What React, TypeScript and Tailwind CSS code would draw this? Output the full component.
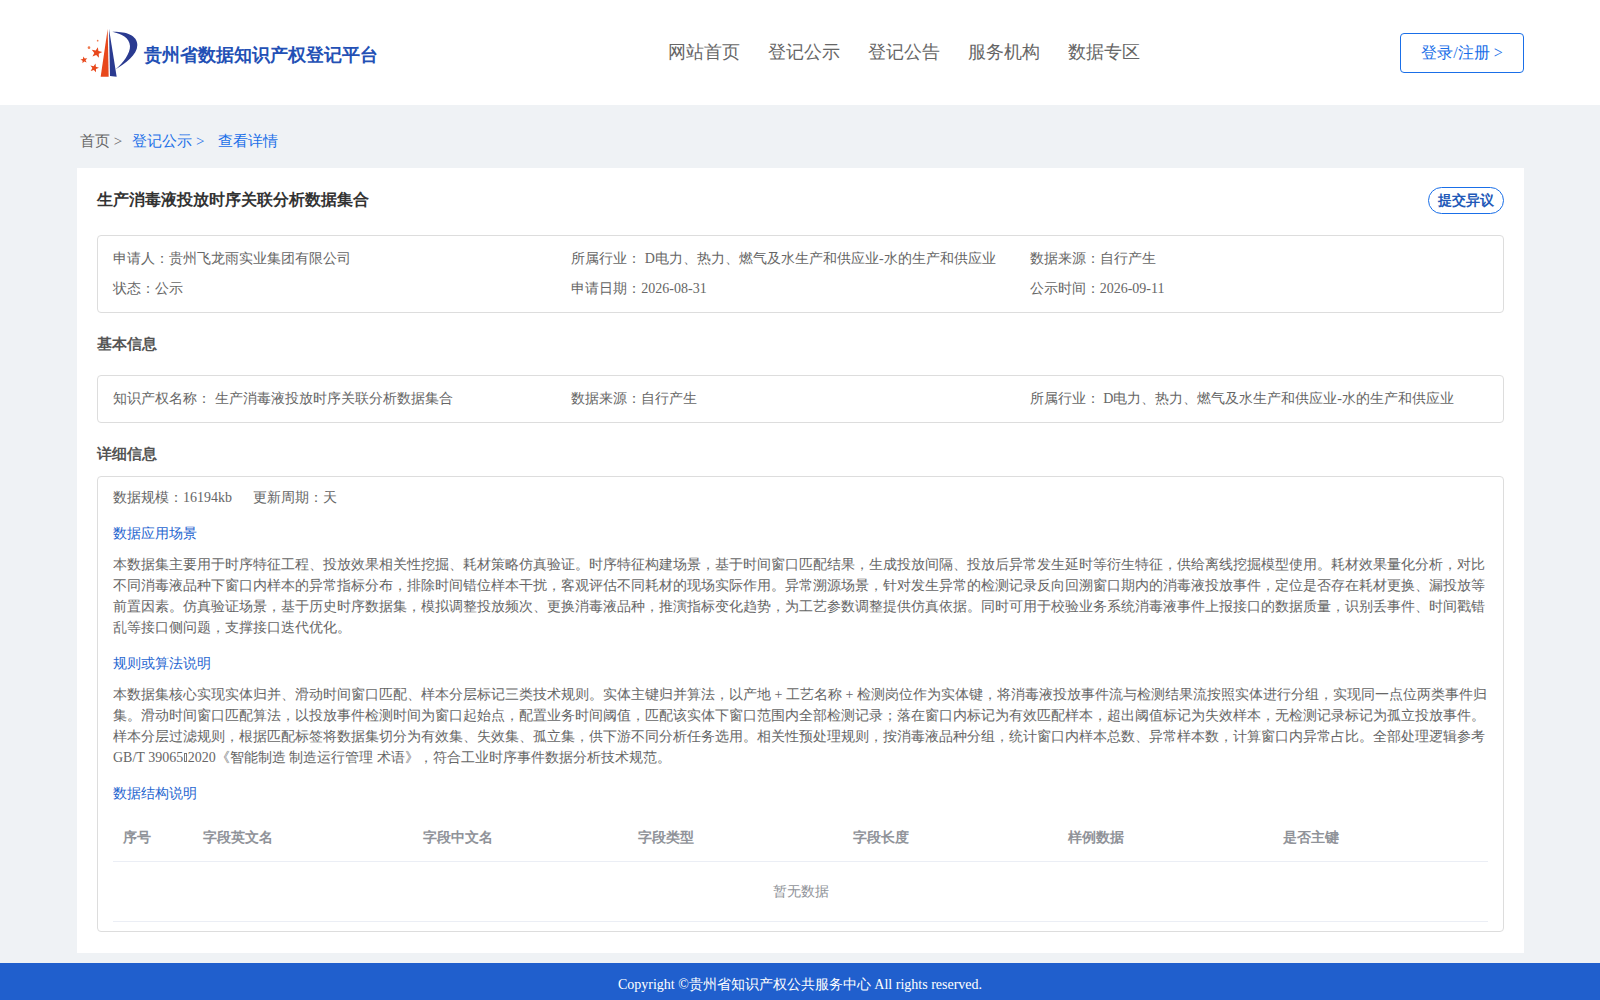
import React from 'react';

const navItems = ['网站首页', '登记公示', '登记公告', '服务机构', '数据专区'];
const columns = [
  { title: '序号', width: 'w-[80px]' },
  { title: '字段英文名', width: 'w-[220px]' },
  { title: '字段中文名', width: 'w-[215px]' },
  { title: '字段类型', width: 'w-[215px]' },
  { title: '字段长度', width: 'w-[215px]' },
  { title: '样例数据', width: 'w-[215px]' },
  { title: '是否主键', width: 'w-[215px]' },
];

// five pointed star for the logo
function starPoints(cx: number, cy: number, r: number, rot: number) {
  const pts: string[] = [];
  for (let i = 0; i < 10; i++) {
    const rad = i % 2 === 0 ? r : r * 0.42;
    const a = ((rot + i * 36 - 90) * Math.PI) / 180;
    pts.push(`${(cx + rad * Math.cos(a)).toFixed(1)},${(cy + rad * Math.sin(a)).toFixed(1)}`);
  }
  return pts.join(' ');
}

function Logo() {
  return (
    <svg width="69" height="65" viewBox="0 0 207 195" className="shrink-0">
      <path d="M98 27 L101 170 L77 170 Z" fill="#e8481c" />
      <path d="M102 27 L125 170 L105 168 Z" fill="#2a3a90" />
      <path d="M112 35 C150 34 187 44 187 75 C187 105 150 130 122 148 C145 128 166 100 165 78 C163 52 140 42 112 35 Z" fill="#2a3a90" />
      <polygon points={starPoints(65, 98, 17, 12)} fill="#e8481c" />
      <polygon points={starPoints(27, 120, 11, -10)} fill="#e8481c" />
      <polygon points={starPoints(58, 144, 14, 15)} fill="#e8481c" />
      <circle cx="42" cy="83" r="4" fill="#ee7a50" />
      <circle cx="68" cy="62" r="2.5" fill="#ee7a50" />
    </svg>
  );
}

function Info({ children }: { children: React.ReactNode }) {
  return <div className="whitespace-nowrap">{children}</div>;
}

export default function App() {
  return (
    <div className="h-[1000px] flex flex-col bg-[#eff2f5] text-[14px] text-[#666] font-['Liberation_Serif',serif] overflow-hidden">
      <header className="h-[105px] shrink-0 bg-white flex items-center pl-[75px] pr-[76px]">
        <div className="flex items-center w-[593px] shrink-0">
          <Logo />
          <h1 className="text-[18px] font-bold text-[#2350b5] whitespace-nowrap mt-[5px]">贵州省数据知识产权登记平台</h1>
        </div>
        <nav className="flex gap-[28px] text-[18px] text-[#666]">
          {navItems.map((item) => (
            <span key={item}>{item}</span>
          ))}
        </nav>
        <button className="ml-auto w-[124px] h-[40px] border border-[#1a6fe8] rounded-[4px] text-[16px] text-[#1a6fe8]">登录/注册 &gt;</button>
      </header>

      <div className="h-[63px] shrink-0 flex items-center pl-[80px] text-[15px] pt-[10px]">
        <span className="text-[#666]">首页 &gt;</span>
        <span className="text-[#1a6fe8] ml-[10px]">登记公示 &gt;</span>
        <span className="text-[#1a6fe8] ml-[14px]">查看详情</span>
      </div>

      <main className="ml-[77px] w-[1447px] h-[785px] shrink-0 bg-white px-[20px] pt-[20px]">
        <div className="flex justify-between items-start h-[47px]">
          <h2 className="text-[16px] font-bold text-[#333] leading-6">生产消毒液投放时序关联分析数据集合</h2>
          <span className="w-[76px] h-[27px] -mt-[1px] border border-[#1a6fe8] rounded-full font-bold text-[#2259b8] flex items-center justify-center">提交异议</span>
        </div>

        <section className="h-[78px] border border-[#ddd] rounded-[4px] px-[15px] pt-[7px] grid grid-cols-3 auto-rows-[30px] items-center">
          <Info>申请人：贵州飞龙雨实业集团有限公司</Info>
          <Info>所属行业： D电力、热力、燃气及水生产和供应业-水的生产和供应业</Info>
          <Info>数据来源：自行产生</Info>
          <Info>状态：公示</Info>
          <Info>申请日期：2026-08-31</Info>
          <Info>公示时间：2026-09-11</Info>
        </section>

        <h3 className="h-[62px] flex items-center text-[15px] font-bold text-[#555] pt-[1px]">基本信息</h3>

        <section className="h-[48px] border border-[#ddd] rounded-[4px] px-[15px] pb-[2px] grid grid-cols-3 items-center">
          <Info>知识产权名称： 生产消毒液投放时序关联分析数据集合</Info>
          <Info>数据来源：自行产生</Info>
          <Info>所属行业： D电力、热力、燃气及水生产和供应业-水的生产和供应业</Info>
        </section>

        <h3 className="h-[53px] flex items-center text-[15px] font-bold text-[#555] pt-[10px]">详细信息</h3>

        <section className="h-[456px] border border-[#ddd] rounded-[4px] px-[15px] pt-[10px]">
          <div className="flex gap-[21px] leading-[21px]">
            <span>数据规模：16194kb</span>
            <span>更新周期：天</span>
          </div>
          <h4 className="text-[#1f66d0] leading-[21px] mt-[15px]">数据应用场景</h4>
          <p className="leading-[21px] mt-[10px]">
            本数据集主要用于时序特征工程、投放效果相关性挖掘、耗材策略仿真验证。时序特征构建场景，基于时间窗口匹配结果，生成投放间隔、投放后异常发生延时等衍生特征，供给离线挖掘模型使用。耗材效果量化分析，对比不同消毒液品种下窗口内样本的异常指标分布，排除时间错位样本干扰，客观评估不同耗材的现场实际作用。异常溯源场景，针对发生异常的检测记录反向回溯窗口期内的消毒液投放事件，定位是否存在耗材更换、漏投放等前置因素。仿真验证场景，基于历史时序数据集，模拟调整投放频次、更换消毒液品种，推演指标变化趋势，为工艺参数调整提供仿真依据。同时可用于校验业务系统消毒液事件上报接口的数据质量，识别丢事件、时间戳错乱等接口侧问题，支撑接口迭代优化。
          </p>
          <h4 className="text-[#1f66d0] leading-[21px] mt-[15px]">规则或算法说明</h4>
          <p className="leading-[21px] mt-[10px]">
            本数据集核心实现实体归并、滑动时间窗口匹配、样本分层标记三类技术规则。实体主键归并算法，以产地 + 工艺名称 + 检测岗位作为实体键，将消毒液投放事件流与检测结果流按照实体进行分组，实现同一点位两类事件归集。滑动时间窗口匹配算法，以投放事件检测时间为窗口起始点，配置业务时间阈值，匹配该实体下窗口范围内全部检测记录；落在窗口内标记为有效匹配样本，超出阈值标记为失效样本，无检测记录标记为孤立投放事件。样本分层过滤规则，根据匹配标签将数据集切分为有效集、失效集、孤立集，供下游不同分析任务选用。相关性预处理规则，按消毒液品种分组，统计窗口内样本总数、异常样本数，计算窗口内异常占比。全部处理逻辑参考GB/T 39065<span className="inline-block w-[3.6px] h-[9px] mx-[0.5px] border-[0.5px] border-[#777]"></span>2020《智能制造 制造运行管理 术语》，符合工业时序事件数据分析技术规范。
          </p>
          <h4 className="text-[#1f66d0] leading-[21px] mt-[15px]">数据结构说明</h4>
          <table className="w-[1375px] table-fixed mt-[8px]">
            <thead>
              <tr className="h-[49px] border-b border-[#ebeef5]">
                {columns.map((c) => (
                  <th key={c.title} className={`${c.width} px-[10px] pt-[2px] text-left font-bold text-[#909399]`}>{c.title}</th>
                ))}
              </tr>
            </thead>
            <tbody>
              <tr className="h-[60px] border-b border-[#ebeef5]">
                <td colSpan={7} className="text-center text-[#909399]">暂无数据</td>
              </tr>
            </tbody>
          </table>
        </section>
      </main>

      <footer className="mt-[10px] h-[37px] shrink-0 bg-[#205fcd] text-white flex items-center justify-center pt-[5px]">
        Copyright ©贵州省知识产权公共服务中心 All rights reserved.
      </footer>
    </div>
  );
}
